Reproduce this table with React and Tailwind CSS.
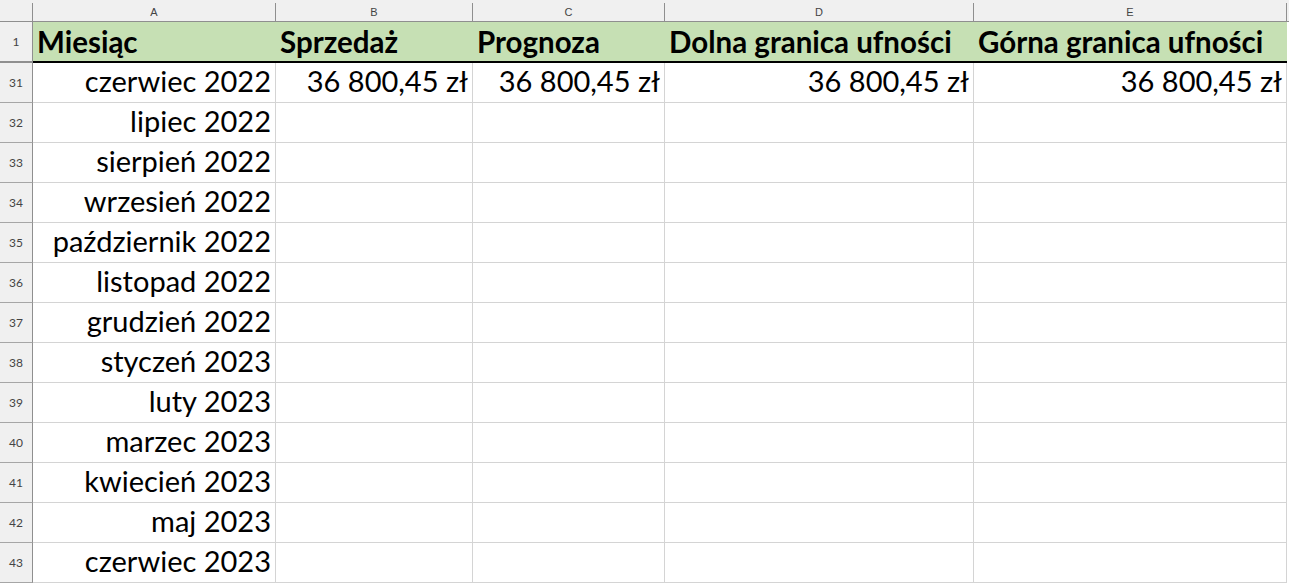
const COLUMNS = [
  { key: "A", width: "w-[243px]" },
  { key: "B", width: "w-[197px]" },
  { key: "C", width: "w-[192px]" },
  { key: "D", width: "w-[309px]" },
  { key: "E", width: "w-[313px]" },
];

const HEADINGS = ["Miesiąc", "Sprzedaż", "Prognoza", "Dolna granica ufności", "Górna granica ufności"];

const MONTHS = [
  "czerwiec 2022",
  "lipiec 2022",
  "sierpień 2022",
  "wrzesień 2022",
  "październik 2022",
  "listopad 2022",
  "grudzień 2022",
  "styczeń 2023",
  "luty 2023",
  "marzec 2023",
  "kwiecień 2023",
  "maj 2023",
  "czerwiec 2023",
];

const AMOUNT = "36 800,45 zł";

function RowHeader({ label, className = "" }) {
  return (
    <div
      className={`flex w-[33px] shrink-0 items-center justify-center border-r border-[#8f8f8f] bg-[#f0f0f0] text-[12px] text-[#444] ${className}`}
    >
      {label}
    </div>
  );
}

export default function App() {
  return (
    <div className="h-[584px] w-[1289px] overflow-hidden bg-white font-['Lato',sans-serif] text-black">
      {/* column letters */}
      <div className="flex h-[22px] border-b border-[#8f8f8f] bg-[#f0f0f0] font-['Liberation_Sans',sans-serif]">
        <div className="flex w-[33px] shrink-0 items-end">
          <div className="h-[18px] w-full border-r border-[#8f8f8f]" />
        </div>
        {COLUMNS.map((c) => (
          <div key={c.key} className={`flex shrink-0 items-end ${c.width}`}>
            <div className="flex h-[18px] w-full items-center justify-center border-r border-[#8f8f8f] text-[11px] text-[#444]">
              {c.key}
            </div>
          </div>
        ))}
      </div>

      {/* row 1: headings */}
      <div className="flex h-[41px]">
        <RowHeader label="1" className="border-b-2 border-b-[#8f8f8f]" />
        {COLUMNS.map((c, i) => (
          <div
            key={c.key}
            className={`flex shrink-0 items-end border-b-2 border-black bg-[#c6e0b4] pb-[2px] pl-[4px] text-[29.5px] font-bold leading-[1.2] whitespace-nowrap ${c.width}`}
          >
            {HEADINGS[i]}
          </div>
        ))}
      </div>

      {/* data rows */}
      {MONTHS.map((m, r) => (
        <div key={m + r} className="flex h-[40px]">
          <RowHeader label={31 + r} className="border-b border-b-[#a6a6a6]" />
          {COLUMNS.map((c, i) => {
            let text = "";
            if (i === 0) text = m;
            else if (r === 0) text = AMOUNT;
            return (
              <div
                key={c.key}
                className={`flex shrink-0 items-end justify-end border-r border-b border-[#d4d4d4] pb-[3px] pr-[4px] text-[29px] leading-[1.2] whitespace-nowrap ${c.width}`}
              >
                {text}
              </div>
            );
          })}
        </div>
      ))}
    </div>
  );
}
